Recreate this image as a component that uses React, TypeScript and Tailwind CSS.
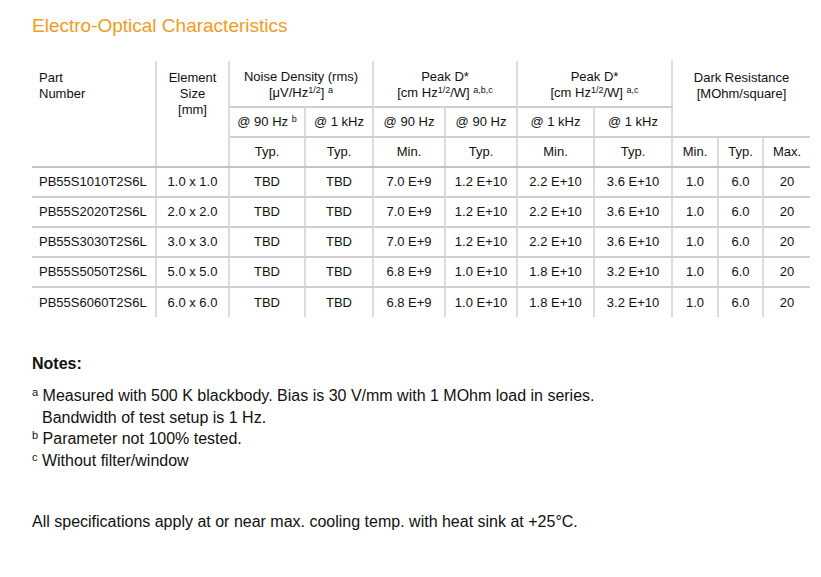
const vline = "border-r-2 border-r-[#dcdcdc]";
const hline = "border-b-2 border-b-[#cfcfcf]";

const rows = [
  ["PB55S1010T2S6L", "1.0 x 1.0", "TBD", "TBD", "7.0 E+9", "1.2 E+10", "2.2 E+10", "3.6 E+10", "1.0", "6.0", "20"],
  ["PB55S2020T2S6L", "2.0 x 2.0", "TBD", "TBD", "7.0 E+9", "1.2 E+10", "2.2 E+10", "3.6 E+10", "1.0", "6.0", "20"],
  ["PB55S3030T2S6L", "3.0 x 3.0", "TBD", "TBD", "7.0 E+9", "1.2 E+10", "2.2 E+10", "3.6 E+10", "1.0", "6.0", "20"],
  ["PB55S5050T2S6L", "5.0 x 5.0", "TBD", "TBD", "6.8 E+9", "1.0 E+10", "1.8 E+10", "3.2 E+10", "1.0", "6.0", "20"],
  ["PB55S6060T2S6L", "6.0 x 6.0", "TBD", "TBD", "6.8 E+9", "1.0 E+10", "1.8 E+10", "3.2 E+10", "1.0", "6.0", "20"],
];

function Sup({ children }: { children: React.ReactNode }) {
  return <span className="relative -top-[4px] text-[9px] leading-none">{children}</span>;
}

function NoteSup({ children }: { children: React.ReactNode }) {
  return <span className="relative -top-[5px] text-[11px] leading-none">{children}</span>;
}

export default function App() {
  return (
    <div className="min-h-[577px] bg-white pl-[32px] pt-[14px] text-[#111] font-['Liberation_Sans',Arial,sans-serif]">
      <h1 className="text-[19px] leading-[24px] text-[#f39a1e]">Electro-Optical Characteristics</h1>

      <table className="mt-[23px] w-[778px] table-fixed border-collapse text-[13px] leading-[16px]">
        <colgroup>
          <col className="w-[124px]" />
          <col className="w-[73px]" />
          <col className="w-[76px]" />
          <col className="w-[68px]" />
          <col className="w-[72px]" />
          <col className="w-[72px]" />
          <col className="w-[77px]" />
          <col className="w-[78px]" />
          <col className="w-[46px]" />
          <col className="w-[45px]" />
          <col className="w-[47px]" />
        </colgroup>
        <thead>
          <tr className="h-[46px]">
            <th rowSpan={3} className={`${vline} border-b-2 border-b-[#c4c4c4] pl-[7px] pt-[9px] text-left align-top font-normal`}>
              Part<br />Number
            </th>
            <th rowSpan={3} className={`${vline} border-b-2 border-b-[#c4c4c4] pt-[9px] align-top font-normal`}>
              Element<br />Size<br />[mm]
            </th>
            <th colSpan={2} className={`${vline} ${hline} pt-[2px] font-normal`}>
              Noise Density (rms)<br />[μV/Hz<Sup>1/2</Sup>] <Sup>a</Sup>
            </th>
            <th colSpan={2} className={`${vline} ${hline} pt-[2px] font-normal`}>
              Peak D*<br />[cm Hz<Sup>1/2</Sup>/W] <Sup>a,b,c</Sup>
            </th>
            <th colSpan={2} className={`${vline} ${hline} pt-[2px] font-normal`}>
              Peak D*<br />[cm Hz<Sup>1/2</Sup>/W] <Sup>a,c</Sup>
            </th>
            <th colSpan={3} rowSpan={2} className={`${hline} pt-[9px] align-top font-normal`}>
              Dark Resistance<br />[MOhm/square]
            </th>
          </tr>
          <tr className="h-[30px]">
            <th className={`${vline} ${hline} font-normal`}>@ 90 Hz <Sup>b</Sup></th>
            <th className={`${vline} ${hline} font-normal`}>@ 1 kHz</th>
            <th className={`${vline} ${hline} font-normal`}>@ 90 Hz</th>
            <th className={`${vline} ${hline} font-normal`}>@ 90 Hz</th>
            <th className={`${vline} ${hline} font-normal`}>@ 1 kHz</th>
            <th className={`${vline} ${hline} font-normal`}>@ 1 kHz</th>
          </tr>
          <tr className="h-[30px]">
            {["Typ.", "Typ.", "Min.", "Typ.", "Min.", "Typ.", "Min.", "Typ.", "Max."].map((t, i) => (
              <th
                key={i}
                className={`${i < 8 ? vline : ""} border-b-2 border-b-[#c4c4c4] font-normal`}
              >
                {t}
              </th>
            ))}
          </tr>
        </thead>
        <tbody>
          {rows.map((r, ri) => (
            <tr key={ri} className="h-[30px]">
              {r.map((c, ci) => (
                <td
                  key={ci}
                  className={`${ci < 10 ? vline : ""} ${ri < rows.length - 1 ? hline : ""} ${ci === 0 ? "pl-[7px] text-left" : "text-center"}`}
                >
                  {c}
                </td>
              ))}
            </tr>
          ))}
        </tbody>
      </table>

      <div className="mt-[36px] text-[16px] leading-[21px]">
        <p className="font-bold">Notes:</p>
        <div className="mt-[11px] leading-[21.5px]">
          <p>
            <NoteSup>a</NoteSup> Measured with 500 K blackbody. Bias is 30 V/mm with 1 MOhm load in series.
          </p>
          <p className="pl-[10px]">Bandwidth of test setup is 1 Hz.</p>
          <p>
            <NoteSup>b</NoteSup> Parameter not 100% tested.
          </p>
          <p>
            <NoteSup>c</NoteSup> Without filter/window
          </p>
        </div>
        <p className="mt-[40px]">All specifications apply at or near max. cooling temp. with heat sink at +25°C.</p>
      </div>
    </div>
  );
}
